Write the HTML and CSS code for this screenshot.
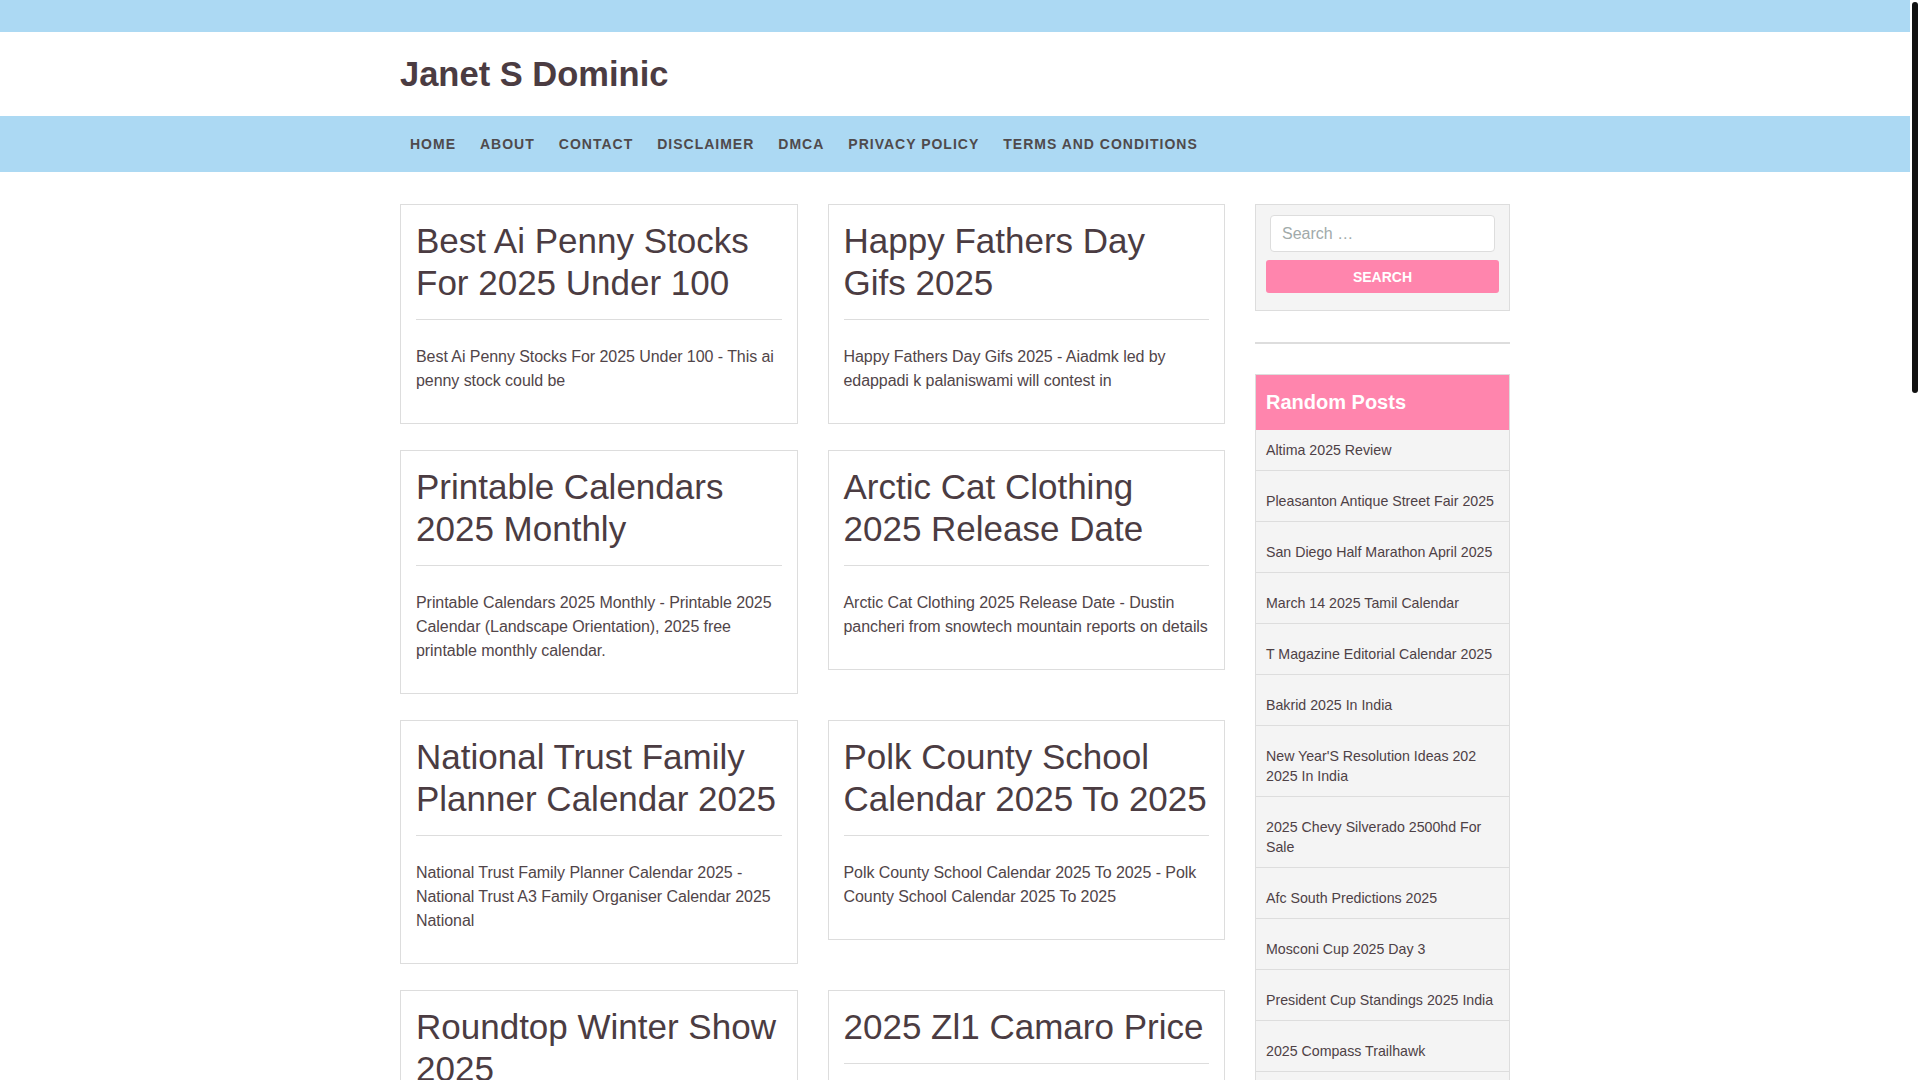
FILE: index.html
```html
<!DOCTYPE html>
<html lang="en">
<head>
    <meta charset="UTF-8">
    <meta name="viewport" content="width=device-width, initial-scale=1.0">
    <title>Janet S Dominic</title>
    <link rel="stylesheet" href="styles.css">
</head>
<body>
    <div class="top-bar"></div>

    <!-- Header -->
    <header class="site-header">
        <div class="container">
            <h1 class="site-title"><a href="#">Janet S Dominic</a></h1>
        </div>
    </header>

    <!-- Main menu -->
    <nav class="main-nav">
        <div class="container">
            <ul class="menu">
                <li><a href="#">Home</a></li>
                <li><a href="#">About</a></li>
                <li><a href="#">Contact</a></li>
                <li><a href="#">Disclaimer</a></li>
                <li><a href="#">DMCA</a></li>
                <li><a href="#">Privacy Policy</a></li>
                <li><a href="#">Terms and Conditions</a></li>
            </ul>
        </div>
    </nav>

    <div class="container content">
        <!-- Posts grid -->
        <main class="posts">
            <article class="post">
                <h2 class="post-title"><a href="#">Best Ai Penny Stocks For 2025 Under 100</a></h2>
                <p class="post-excerpt">Best Ai Penny Stocks For 2025 Under 100 - This ai penny stock could be</p>
            </article>
            <article class="post">
                <h2 class="post-title"><a href="#">Happy Fathers Day Gifs 2025</a></h2>
                <p class="post-excerpt">Happy Fathers Day Gifs 2025 - Aiadmk led by edappadi k palaniswami will contest in</p>
            </article>
            <article class="post">
                <h2 class="post-title"><a href="#">Printable Calendars 2025 Monthly</a></h2>
                <p class="post-excerpt">Printable Calendars 2025 Monthly - Printable 2025 Calendar (Landscape Orientation), 2025 free printable monthly calendar.</p>
            </article>
            <article class="post">
                <h2 class="post-title"><a href="#">Arctic Cat Clothing 2025 Release Date</a></h2>
                <p class="post-excerpt">Arctic Cat Clothing 2025 Release Date - Dustin pancheri from snowtech mountain reports on details</p>
            </article>
            <article class="post">
                <h2 class="post-title"><a href="#">National Trust Family Planner Calendar 2025</a></h2>
                <p class="post-excerpt">National Trust Family Planner Calendar 2025 - National Trust A3 Family Organiser Calendar 2025 National</p>
            </article>
            <article class="post">
                <h2 class="post-title"><a href="#">Polk County School Calendar 2025 To 2025</a></h2>
                <p class="post-excerpt">Polk County School Calendar 2025 To 2025 - Polk County School Calendar 2025 To 2025</p>
            </article>
            <article class="post">
                <h2 class="post-title"><a href="#">Roundtop Winter Show 2025</a></h2>
                <p class="post-excerpt">Roundtop Winter Show 2025 - The winter antiques show returns to round top with more than</p>
            </article>
            <article class="post">
                <h2 class="post-title"><a href="#">2025 Zl1 Camaro Price</a></h2>
                <p class="post-excerpt">2025 Zl1 Camaro Price - The final edition of the camaro zl1 arrives with</p>
            </article>
            <article class="post">
                <h2 class="post-title"><a href="#">Easter Sunday 2025 Date</a></h2>
                <p class="post-excerpt">Easter Sunday 2025 Date - Easter sunday falls on april 20 this year for western churches</p>
            </article>
            <article class="post">
                <h2 class="post-title"><a href="#">Kia Telluride 2025 Release Date</a></h2>
                <p class="post-excerpt">Kia Telluride 2025 Release Date - The refreshed telluride is expected to arrive at dealers</p>
            </article>
            <article class="post">
                <h2 class="post-title"><a href="#">Disney World Calendar 2025</a></h2>
                <p class="post-excerpt">Disney World Calendar 2025 - Plan your visit with crowd levels, park hours and special events</p>
            </article>
            <article class="post">
                <h2 class="post-title"><a href="#">Mlb Opening Day 2025</a></h2>
                <p class="post-excerpt">Mlb Opening Day 2025 - All thirty teams are scheduled to play on opening day</p>
            </article>
            <article class="post">
                <h2 class="post-title"><a href="#">Chinese New Year 2025 Animal</a></h2>
                <p class="post-excerpt">Chinese New Year 2025 Animal - 2025 is the year of the wood snake in the chinese zodiac</p>
            </article>
            <article class="post">
                <h2 class="post-title"><a href="#">Toyota Tacoma 2025 Colors</a></h2>
                <p class="post-excerpt">Toyota Tacoma 2025 Colors - See every exterior paint option available for the new tacoma</p>
            </article>
        </main>

        <!-- Sidebar -->
        <aside class="sidebar">
            <div class="widget search-widget">
                <form class="search-form" onsubmit="return false">
                    <input type="search" class="search-field" placeholder="Search …">
                    <button type="submit" class="search-submit">Search</button>
                </form>
            </div>

            <hr class="widget-sep">

            <div class="widget random-posts">
                <h3 class="widget-title">Random Posts</h3>
                <ul>
                    <li><a href="#">Altima 2025 Review</a></li>
                    <li><a href="#">Pleasanton Antique Street Fair 2025</a></li>
                    <li><a href="#">San Diego Half Marathon April 2025</a></li>
                    <li><a href="#">March 14 2025 Tamil Calendar</a></li>
                    <li><a href="#">T Magazine Editorial Calendar 2025</a></li>
                    <li><a href="#">Bakrid 2025 In India</a></li>
                    <li><a href="#">New Year'S Resolution Ideas 202 2025 In India</a></li>
                    <li><a href="#">2025 Chevy Silverado 2500hd For Sale</a></li>
                    <li><a href="#">Afc South Predictions 2025</a></li>
                    <li><a href="#">Mosconi Cup 2025 Day 3</a></li>
                    <li><a href="#">President Cup Standings 2025 India</a></li>
                    <li><a href="#">2025 Compass Trailhawk</a></li>
                    <li><a href="#">Lunar Eclipse 2025 Usa</a></li>
                    <li><a href="#">Honda Cr V 2025 Redesign</a></li>
                    <li><a href="#">Nfl Draft 2025 Mock Draft</a></li>
                </ul>
            </div>
        </aside>
    </div>

    <footer class="site-footer">
        <div class="container">
            <p>Copyright &copy; 2025 Janet S Dominic. All rights reserved.</p>
        </div>
    </footer>

    <!-- scrollbar thumb drawn over the right edge -->
    <div class="scroll-thumb"></div>
</body>
</html>
```

FILE: styles.css
```css
body { font-family: "Liberation Sans", Arial, sans-serif; color: #4e4146; background-color: #fff; margin: 0 10px 0 0; }
a { color: inherit; text-decoration: none; }
.container { width: 1110px; margin: 0 auto; }

.scroll-thumb {
    position: fixed;
    top: 2px;
    right: 2px;
    width: 6px;
    height: 391px;
    background-color: #111;
    border-radius: 3px;
}

.top-bar { height: 32px; background-color: #acd9f3; }

.site-header { padding: 24px 0; }
.site-title { margin: 0; font-size: 34.5px; line-height: 36px; font-weight: bold; color: #4b3c42; }

.main-nav { background-color: #acd9f3; }
.menu { list-style: none; margin: 0 -2px; padding: 0; display: flex; }
.menu a {
    display: block;
    padding: 0 12px;
    line-height: 56px;
    font-size: 14px;
    font-weight: bold;
    text-transform: uppercase;
    letter-spacing: 1px;
    color: #4f4a4c;
}

.content { display: flex; align-items: flex-start; gap: 30px; padding-top: 32px; }

/* posts */
.posts {
    width: 825px;
    display: grid;
    grid-template-columns: 1fr 1fr;
    column-gap: 30px;
    row-gap: 26px;
    align-items: start;
}
.post { border: 1px solid #ddd; padding: 15px; }
.post-title {
    margin: 0;
    padding-bottom: 15px;
    border-bottom: 1px solid #ddd;
    font-size: 35px;
    line-height: 42px;
    font-weight: normal;
    color: #4b3c42;
}
.post-excerpt { margin: 25px 0 15px; font-size: 16px; line-height: 24px; letter-spacing: -0.06px; color: #514549; }

/* sidebar */
.sidebar { width: 255px; }
.search-widget { background-color: #f4f4f4; border: 1px solid #ddd; padding: 10px 10px 17px; }
.search-field {
    display: block;
    box-sizing: border-box;
    width: calc(100% - 8px);
    height: 37px;
    margin: 0 4px;
    padding: 0 11px;
    border: 1px solid #ddd;
    border-radius: 4px;
    background: #fff;
    font-family: inherit;
    font-size: 16px;
    color: #4e4146;
    outline: none;
}
.search-field::placeholder { color: #a1aaaa; }
.search-submit {
    display: block;
    width: 100%;
    height: 33px;
    margin-top: 8px;
    border: 0;
    border-radius: 3px;
    background-color: #ff85ad;
    color: #fff;
    font-family: inherit;
    font-size: 14px;
    font-weight: bold;
    text-transform: uppercase;
    cursor: pointer;
}

.widget-sep { margin: 31px 0 30px; border: 0; height: 2px; background-color: #ddd; }

.random-posts { background-color: #f4f4f4; border: 1px solid #ddd; }
.widget-title {
    margin: 0;
    padding: 15px 10px;
    background-color: #ff85ad;
    color: #fff;
    font-size: 20px;
    line-height: 25px;
    font-weight: bold;
}
.random-posts ul { list-style: none; margin: 0; padding: 0; }
.random-posts li {
    padding: 10px;
    border-bottom: 1px solid #ddd;
    font-size: 14.2px;
    line-height: 20px;
}
.random-posts li + li { padding-top: 20px; }

.site-footer { margin-top: 40px; background-color: #acd9f3; padding: 30px 0; font-size: 14px; }
.site-footer p { margin: 0; text-align: center; }
```
